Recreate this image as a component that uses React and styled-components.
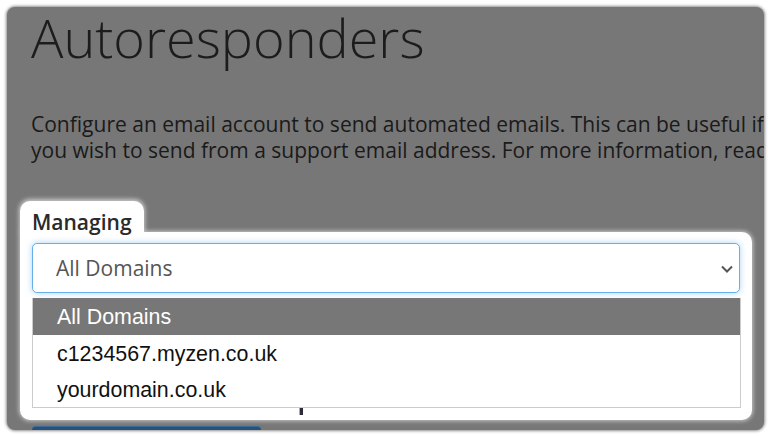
import React from "react";
import styled, { createGlobalStyle } from "styled-components";

const Global = createGlobalStyle`
  html, body { margin: 0; padding: 0; background: #ffffff; }
  * { box-sizing: border-box; }
`;

const Panel = styled.div`
  margin: 7px;
  width: 757px;
  height: 423px;
  background: #777777;
  border-radius: 8px;
  overflow: hidden;
  box-shadow: 0 0 3px 1px rgba(0, 0, 0, 0.45);
  padding: 3px 0 0 13px;
  display: flex;
  flex-direction: column;
  align-items: flex-start;
`;

const Title = styled.h1`
  margin: 0;
  padding-left: 11px;
  font-family: "Open Sans", sans-serif;
  font-weight: 300;
  font-size: 54px;
  line-height: 54px;
  color: #1c1c1c;
  white-space: nowrap;
`;

const Intro = styled.p`
  margin: 48px 0 0;
  padding-left: 11px;
  font-family: "Open Sans", sans-serif;
  font-size: 21px;
  line-height: 25.5px;
  color: #1a1a1a;
  white-space: nowrap;
`;

const Spotlight = styled.div`
  margin-top: 38px;
  display: flex;
  flex-direction: column;
  align-items: flex-start;
`;

const Tab = styled.div`
  position: relative;
  z-index: 1;
  width: 124px;
  height: 31px;
  background: #ffffff;
  border-radius: 10px 10px 0 0;
  box-shadow: 0 -1px 4px 1px rgba(255, 255, 255, 0.6);
  padding: 8px 0 0 12px;
  font-family: "Open Sans", sans-serif;
  font-weight: 600;
  font-size: 21px;
  line-height: 26px;
  color: #2a2a2a;
`;

const Box = styled.div`
  position: relative;
  width: 732px;
  height: 188px;
  background: #ffffff;
  border-radius: 0 10px 10px 10px;
  box-shadow: 0 0 4px 1px rgba(255, 255, 255, 0.6);
  padding: 11px 12px 0;
  display: flex;
  flex-direction: column;
`;

const Select = styled.div`
  position: relative;
  z-index: 2;
  height: 50px;
  border: 1px solid #66afe9;
  border-radius: 5px;
  background: #ffffff;
  box-shadow: 0 0 6px rgba(102, 175, 233, 0.55);
  display: flex;
  align-items: center;
  justify-content: space-between;
  padding: 0 6px 0 23px;
  font-family: "Open Sans", sans-serif;
  font-size: 21px;
  color: #555555;
`;

const Chevron = styled.svg`
  width: 12px;
  height: 8px;
  margin-top: 1px;
`;

const List = styled.ul`
  list-style: none;
  margin: 5px 0 0;
  padding: 0;
  border: 1px solid #cccccc;
  border-top: none;
  width: 709px;
`;

const Option = styled.li`
  height: ${(p) => (p.$active ? 37 : 36)}px;
  display: flex;
  align-items: center;
  padding: 2px 0 0 24px;
  font-family: "Liberation Sans", Arial, sans-serif;
  font-size: 21.4px;
  color: ${(p) => (p.$active ? "#ffffff" : "#111111")};
  background: ${(p) => (p.$active ? "#777777" : "#ffffff")};
`;

const Caret = styled.span`
  position: absolute;
  left: 279px;
  top: 176px;
  width: 4px;
  height: 7px;
  background: #2c2c38;
  border-left: 1px solid #d9a060;
`;

const HiddenButton = styled.div`
  margin: 6px 0 0 12px;
  width: 229px;
  height: 20px;
  background: #27507a;
  border-top: 1px solid #3a6a98;
  border-radius: 4px 4px 0 0;
`;

export default function App() {
  return (
    <>
      <Global />
      <Panel>
        <Title>Autoresponders</Title>
        <Intro>
          Configure an email account to send automated emails. This can be useful if you want to respond to every message
          <br />
          you wish to send from a support email address. For more information, read the documentation.
        </Intro>
        <Spotlight>
          <Tab>Managing</Tab>
          <Box>
            <Select>
              <span>All Domains</span>
              <Chevron viewBox="0 0 12 8">
                <polyline points="1,1.5 6,6.5 11,1.5" fill="none" stroke="#555" strokeWidth="2" />
              </Chevron>
            </Select>
            <List>
              <Option $active>All Domains</Option>
              <Option>c1234567.myzen.co.uk</Option>
              <Option>yourdomain.co.uk</Option>
            </List>
            <Caret />
          </Box>
          <HiddenButton />
        </Spotlight>
      </Panel>
    </>
  );
}
